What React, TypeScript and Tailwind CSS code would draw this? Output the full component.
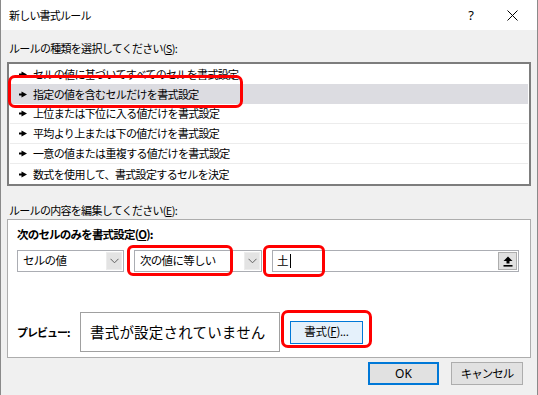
import React from "react";

const Arrow = () => (
  <svg width="8" height="7" viewBox="0 0 8 7" className="shrink-0">
    <rect x="0" y="2.5" width="3" height="2" fill="#000" />
    <polygon points="2.5,0.5 8,3.5 2.5,6.5" fill="#000" />
  </svg>
);

const Chevron = () => (
  <svg width="9" height="6" viewBox="0 0 9 6">
    <polyline points="0.5,0.8 4.5,4.8 8.5,0.8" fill="none" stroke="#606060" strokeWidth="1" />
  </svg>
);

const items = [
  "セルの値に基づいてすべてのセルを書式設定",
  "指定の値を含むセルだけを書式設定",
  "上位または下位に入る値だけを書式設定",
  "平均より上または下の値だけを書式設定",
  "一意の値または重複する値だけを書式設定",
  "数式を使用して、書式設定するセルを決定",
];

export default function App() {
  return (
    <div className="relative w-[538px] h-[395px] bg-[#f0f0f0] border-x border-[#8a8a8a] font-['Noto_Sans_CJK_JP',sans-serif] text-[11.5px] text-black overflow-hidden">
      {/* title bar */}
      <div className="h-[30px] bg-white flex items-center pl-[8px]">
        <span className="text-[11px] tracking-[-0.8px] leading-none">新しい書式ルール</span>
        <div className="ml-auto flex items-center">
          <span className="text-[13px] font-['Noto_Sans',sans-serif] leading-none mr-[33px]">?</span>
          <svg width="11" height="11" viewBox="0 0 11 11" className="mr-[19px]">
            <line x1="0.5" y1="0.5" x2="10.5" y2="10.5" stroke="#000" strokeWidth="1" />
            <line x1="10.5" y1="0.5" x2="0.5" y2="10.5" stroke="#000" strokeWidth="1" />
          </svg>
        </div>
      </div>

      <div className="px-[6px] flex flex-col">
        <div className="mt-[10px] h-[16px] leading-[16px] pl-[2px] text-[11px] tracking-[-0.7px]">
          ルールの種類を選択してください(<span className="underline">S</span>):
        </div>
        <div className="mt-[6px] h-[124px] w-[524px] border-2 border-[#7d7d7d] bg-white flex flex-col">
          {items.map((t, i) => (
            <div
              key={i}
              className={
                "h-[20px] flex items-center gap-[6px] pl-[9px] mx-[1px] " +
                (i === 1 ? "bg-[#dcdce1] " : "") +
                (i >= 2 && i <= 4 ? "border-b border-[#ececec] " : "")
              }
            >
              <Arrow />
              <span className="text-[11px] tracking-[-0.65px] leading-none">{t}</span>
            </div>
          ))}
        </div>

        <div className="mt-[16px] h-[16px] leading-[16px] pl-[2px] text-[11px] tracking-[-0.7px]">
          ルールの内容を編集してください(<span className="underline">E</span>):
        </div>
        <div className="mt-[1px] h-[139px] w-[524px] border border-[#adadad] bg-white flex flex-col pl-[9px]">
          <div className="mt-[6px] h-[16px] leading-[16px] font-bold tracking-[-0.8px]">
            次のセルのみを書式設定(<span className="underline">O</span>):
          </div>
          <div className="mt-[8px] flex gap-[10px]">
            <div className="w-[107px] h-[22px] border border-[#abadb3] flex items-center">
              <span className="pl-[5px] tracking-[-0.7px] leading-none">セルの値</span>
              <div className="ml-auto mr-[1px] w-[16px] h-[18px] bg-[#e3e3e3] border border-[#ececec] flex items-center justify-center">
                <Chevron />
              </div>
            </div>
            <div className="w-[128px] h-[22px] border border-[#abadb3] flex items-center">
              <span className="pl-[5px] tracking-[-0.7px] leading-none">次の値に等しい</span>
              <div className="ml-auto mr-[1px] w-[16px] h-[18px] bg-[#e3e3e3] border border-[#ececec] flex items-center justify-center">
                <Chevron />
              </div>
            </div>
            <div className="w-[247px] h-[22px] border border-[#abadb3] flex items-center">
              <span className="pl-[4px] leading-none">土</span>
              <span className="ml-[1px] w-px h-[14px] bg-black" />
              <div className="ml-auto mr-[1px] w-[19px] h-[18px] bg-[#e1e1e1] border border-[#adadad] flex items-center justify-center">
                <svg width="10" height="11" viewBox="0 0 10 11">
                  <polygon points="5,0.5 9.5,5 6.5,5 6.5,7.5 3.5,7.5 3.5,5 0.5,5" fill="#000" />
                  <rect x="0.5" y="9" width="9" height="1.6" fill="#000" />
                </svg>
              </div>
            </div>
          </div>
          <div className="mt-[40px] flex items-center">
            <span className="w-[63px] font-bold text-[11px] tracking-[-1px] leading-none">プレビュー:</span>
            <div className="w-[200px] h-[40px] border border-[#a0a0a0] flex items-center pl-[9px]">
              <span className="text-[14.5px] tracking-[0.2px] leading-none">書式が設定されていません</span>
            </div>
            <div className="ml-[10px] w-[73px] h-[23px] bg-[#e5f1fb] border border-[#0078d7] flex items-center justify-center">
              <span className="tracking-[-0.3px] leading-none">書式(<span className="underline">F</span>)...</span>
            </div>
          </div>
        </div>
        <div className="mt-[4px] flex justify-end gap-[12px] pr-[8px]">
          <div className="w-[71px] h-[23px] bg-[#e1e1e1] border-2 border-[#0078d7] flex items-center justify-center">
            <span className="font-['Noto_Sans',sans-serif] text-[12px] leading-none">OK</span>
          </div>
          <div className="w-[72px] h-[23px] bg-[#e1e1e1] border border-[#adadad] flex items-center justify-center">
            <span className="tracking-[-1px] leading-none">キャンセル</span>
          </div>
        </div>
      </div>

      {/* red highlight overlays */}
      <div className="absolute left-[7px] top-[75px] w-[235px] h-[33px] border-[3px] border-[#ff0000] rounded-[7px]" />
      <div className="absolute left-[126px] top-[245px] w-[106px] h-[31px] border-[3px] border-[#ff0000] rounded-[6px]" />
      <div className="absolute left-[262px] top-[245px] w-[62px] h-[32px] border-[3px] border-[#ff0000] rounded-[6px]" />
      <div className="absolute left-[280px] top-[310px] w-[91px] h-[38px] border-[3px] border-[#ff0000] rounded-[7px]" />
    </div>
  );
}
